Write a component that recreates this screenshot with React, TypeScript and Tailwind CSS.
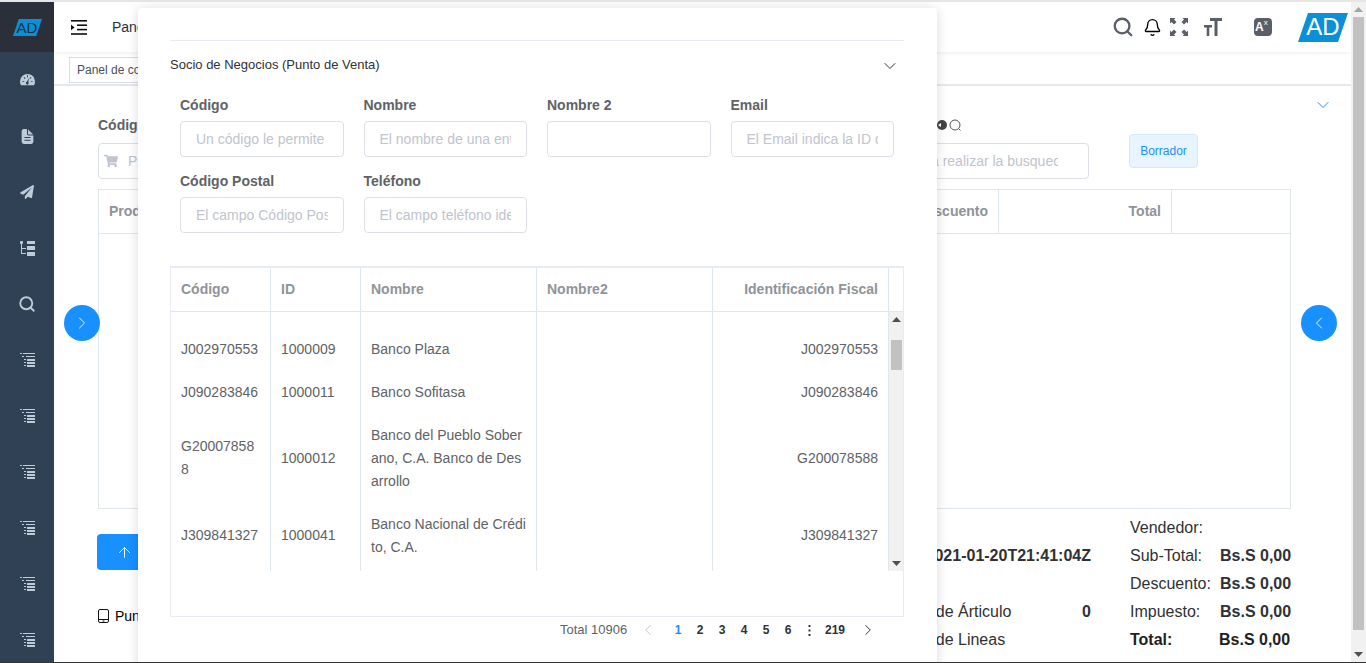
import { ChevronDown, ChevronLeft, ChevronRight, ArrowUp, Search, Bell } from 'lucide-react';
import { FaPaperPlane, FaShoppingCart } from 'react-icons/fa';
import { IoDocumentText } from 'react-icons/io5';

const rows = [
  { code: 'J002970553', id: '1000009', name: 'Banco Plaza', fiscal: 'J002970553' },
  { code: 'J090283846', id: '1000011', name: 'Banco Sofitasa', fiscal: 'J090283846' },
  { code: 'G200078588', id: '1000012', name: 'Banco del Pueblo Soberano, C.A. Banco de Desarrollo', fiscal: 'G200078588' },
  { code: 'J309841327', id: '1000041', name: 'Banco Nacional de Crédito, C.A.', fiscal: 'J309841327' },
];

const totals = [
  { label: 'Sub-Total:', value: 'Bs.S 0,00' },
  { label: 'Descuento:', value: 'Bs.S 0,00' },
  { label: 'Impuesto:', value: 'Bs.S 0,00' },
];

const listIcons = [0, 1, 2, 3, 4, 5];

function DashboardIcon() {
  return (
    <svg width="15" height="13" viewBox="0 0 16 13" className="-mt-px">
      <path d="M8 0.500a8 8 0 0 0-8 8c0 1.500.4 2.900 1.100 4h13.800c.7-1.100 1.100-2.500 1.100-4a8 8 0 0 0-8-8z" fill="#bfcbd9" />
      <path d="M7.500 2h1v2h-1zM2.500 8h2v1h-2zM11.500 8h2v1h-2zM3.800 4.500l.7-.7 1.400 1.400-.7.7zM11.500 3.800l.7.7-1.400 1.400-.7-.7z" fill="#304156" />
      <path d="M9.800 5l-1 4.200a1.500 1.500 0 1 1-1.600-.2z" fill="#304156" />
    </svg>
  );
}

function TreeIcon() {
  return (
    <svg width="15" height="15" viewBox="0 0 15 15" fill="#bfcbd9">
      <rect x="0" y="0" width="3" height="3" rx="1" />
      <rect x="1" y="3" width="1" height="10" />
      <rect x="1" y="7" width="5" height="1" />
      <rect x="1" y="12" width="5" height="1" />
      <rect x="7" y="0" width="8" height="3" />
      <rect x="7" y="5" width="8" height="4" />
      <rect x="7" y="11" width="8" height="4" />
    </svg>
  );
}

function ListIcon() {
  return (
    <svg width="15" height="14" viewBox="0 0 15 14" fill="#bfcbd9">
      <rect x="0" y="0" width="2" height="1" />
      <rect x="3" y="0" width="12" height="1" />
      <rect x="2" y="3" width="2" height="1" />
      <rect x="6" y="3" width="9" height="1" />
      <rect x="4" y="6" width="2" height="1" />
      <rect x="7" y="6" width="8" height="2" />
      <rect x="4" y="9" width="2" height="1" />
      <rect x="7" y="9" width="8" height="2" />
      <rect x="4" y="12" width="2" height="1" />
      <rect x="7" y="12" width="8" height="2" />
    </svg>
  );
}

function FullscreenIcon() {
  return (
    <svg width="18" height="18" viewBox="0 0 18 18" fill="#5a5e66">
      <path d="M0 0h5.500L4 1.500 6.500 4 4 6.500 1.500 4 0 5.500z" />
      <path d="M18 0v5.500L16.500 4 14 6.500 11.500 4 14 1.500 12.500 0z" />
      <path d="M0 18v-5.500L1.500 14 4 11.500 6.500 14 4 16.500 5.500 18z" />
      <path d="M18 18h-5.500l1.500-1.500L11.500 14 14 11.500l2.500 2.500 1.500-1.500z" />
    </svg>
  );
}

function TextSizeIcon() {
  return (
    <svg width="18" height="18" viewBox="0 0 18 18" fill="#5a5e66">
      <path d="M6 0h12v3h-4.500v15h-3V3H6z" />
      <path d="M0 7h8v2.500H5.300V18H2.700V9.500H0z" />
    </svg>
  );
}

function HamburgerIcon() {
  return (
    <svg width="16" height="15" viewBox="0 0 16 15" fill="#111">
      <rect x="0" y="0" width="16" height="1.600" />
      <rect x="6" y="4.400" width="10" height="1.600" />
      <rect x="6" y="8.800" width="10" height="1.600" />
      <rect x="0" y="13.200" width="16" height="1.600" />
      <path d="M0 4.500l3.500 2.900L0 10.200z" />
    </svg>
  );
}

function TabletIcon() {
  return (
    <svg width="11" height="14" viewBox="0 0 11 14" fill="none" stroke="#111" strokeWidth="1">
      <rect x="0.500" y="0.500" width="10" height="13" rx="1.500" />
      <path d="M0.500 10.500h10" />
      <path d="M4.500 12h2" />
    </svg>
  );
}

function LogoMark({ className, textClass }: { className: string; textClass: string }) {
  return (
    <div className={`relative flex items-center justify-center ${className}`}>
      <svg className="absolute inset-0 h-full w-full" viewBox="0 0 50 29" preserveAspectRatio="none">
        <polygon points="10,0 50,0 40,29 0,29" fill="#0a90d6" />
      </svg>
      <span className={`relative ${textClass}`}>AD</span>
    </div>
  );
}

function ModalField({ label, placeholder }: { label: string; placeholder?: string }) {
  return (
    <div className="w-[163.500px]">
      <div className="h-[16px] text-sm leading-[16px] font-bold text-[#606266]">{label}</div>
      <div className="mt-2 flex h-9 items-center overflow-hidden rounded border border-[#dcdfe6] px-[15px] text-sm whitespace-nowrap text-[#c0c4cc]">
        <span className="block w-full overflow-hidden">{placeholder}</span>
      </div>
    </div>
  );
}

function ScrollArrow({ up, color }: { up?: boolean; color: string }) {
  return (
    <svg width="9" height="5" viewBox="0 0 9 5" fill={color}>
      {up ? <path d="M4.500 0L9 5H0z" /> : <path d="M0 0h9L4.500 5z" />}
    </svg>
  );
}

export default function App() {
  return (
    <div className="relative h-[663px] w-[1366px] overflow-hidden bg-white font-['Liberation_Sans',Arial,sans-serif] text-sm">
      <div className="flex h-[662px] overflow-hidden border-t-2 border-[#e6e6e6]">
        {/* sidebar */}
        <aside className="w-[54px] shrink-0 bg-[#304156]">
          <div className="flex h-[50px] items-center justify-center bg-[#2b2f3a]">
            <LogoMark className="h-[17px] w-[29px]" textClass="text-[15px] leading-none text-[#1f2d3d]" />
          </div>
          <div className="flex h-[56px] items-center justify-center">
            <DashboardIcon />
          </div>
          <div className="flex h-[56px] items-center justify-center">
            <IoDocumentText className="text-[#bfcbd9]" size={17} />
          </div>
          <div className="flex h-[56px] items-center justify-center">
            <FaPaperPlane className="text-[#bfcbd9]" size={14} />
          </div>
          <div className="flex h-[56px] items-center justify-center">
            <TreeIcon />
          </div>
          <div className="flex h-[56px] items-center justify-center">
            <Search className="text-[#bfcbd9]" size={18} strokeWidth={2.500} />
          </div>
          {listIcons.map((i) => (
            <div key={i} className="flex h-[56px] items-center justify-center">
              <ListIcon />
            </div>
          ))}
        </aside>

        <main className="flex w-[1297px] shrink-0 flex-col">
          {/* header */}
          <header className="flex h-[50px] shrink-0 items-center pr-[3px] pl-[17px] shadow-[0_1px_4px_rgba(0,21,41,0.08)]">
            <HamburgerIcon />
            <span className="ml-[25px] text-sm text-[#303133]">Panel de control</span>
            <div className="ml-auto flex items-center">
              <Search className="text-[#5a5e66]" size={22} strokeWidth={2.500} />
              <Bell className="ml-[9px] text-black" size={19} strokeWidth={1.700} />
              <div className="ml-[8px]">
                <FullscreenIcon />
              </div>
              <div className="ml-[16px]">
                <TextSizeIcon />
              </div>
              <div className="ml-[32px] flex h-[18px] w-[18px] items-start rounded-sm bg-[#5a5e66] pl-[1px] text-[12px] leading-[19px] font-bold text-white">
                A<span className="text-[8px] leading-[10px] font-normal">x</span>
              </div>
              <LogoMark className="ml-[26px] h-[29px] w-[50px]" textClass="text-[24px] leading-none text-white" />
            </div>
          </header>

          {/* tags bar */}
          <div className="flex h-[34px] shrink-0 items-center border-b-2 border-[#e4e7ed] pt-[3px] pl-[15px]">
            <div className="flex h-[26px] w-[110px] items-center border border-[#d8dce5] px-[7px] text-xs whitespace-nowrap text-[#495060]">
              Panel de control
            </div>
          </div>

          {/* pos form */}
          <div className="relative flex-1 pr-[60px] pl-[44px]">
            <div className="flex h-[103px] pt-[31px]">
              <div className="w-[300px]">
                <div className="text-sm leading-4 font-bold text-[#606266]">Código de Producto</div>
                <div className="mt-[10px] flex h-9 items-center rounded border border-[#dcdfe6] pl-[5px] text-[#c0c4cc]">
                  <FaShoppingCart size={14} />
                  <span className="ml-[10px]">Producto</span>
                </div>
              </div>
              <div className="ml-[531px] w-[160px]">
                <div className="flex h-4 items-center justify-end pr-[127px]">
                  <svg width="26" height="12" viewBox="0 0 26 12" className="shrink-0">
                    <circle cx="6" cy="6" r="5" fill="#444" />
                    <path d="M2 6l3-2v4z" fill="#fff" />
                    <circle cx="19" cy="6" r="5" fill="none" stroke="#555" strokeWidth="1" />
                    <path d="M22.500 9.500l2 2" stroke="#555" strokeWidth="1" />
                  </svg>
                </div>
                <div className="mt-[10px] flex h-9 items-center overflow-hidden rounded border border-[#dcdfe6] pr-[30px] pl-[1px] text-sm whitespace-nowrap text-[#c0c4cc]">
                  <span className="block w-full overflow-hidden">a realizar la busqueda</span>
                </div>
              </div>
              <div className="mt-[17px] ml-10 flex h-[34px] w-[69px] items-center justify-center rounded border border-[#d1e9ff] bg-[#e8f4ff] text-xs text-[#1890ff]">
                Borrador
              </div>
            </div>
            <ChevronDown className="absolute top-[9px] right-[18px] text-[#1890ff]" size={20} strokeWidth={1.200} />

            {/* products table */}
            <div className="h-[320px] border border-[#dfe6ec]">
              <div className="flex h-[44px] items-center border-b border-[#dfe6ec] text-sm font-bold text-[#909399]">
                <span className="w-[700px] pb-[2px] pl-[10px]">Producto</span>
                <div className="w-[199px] pr-[10px] pb-[2px] text-right">Descuento</div>
                <div className="flex h-full w-[174px] items-center justify-end border-x border-[#dfe6ec] pr-[10px] pb-[2px]">
                  Total
                </div>
              </div>
            </div>

            {/* totals */}
            <div className="flex pt-[5px] text-[16px] leading-[28px] text-[#303133]">
              <div className="w-[300px] pt-[20px]">
                <div className="-ml-px flex h-9 w-[100px] items-center rounded bg-[#1890ff] pl-[19px] text-white">
                  <ArrowUp size={17} strokeWidth={1.300} />
                </div>
                <div className="mt-[36px] flex items-center text-sm">
                  <TabletIcon />
                  <span className="ml-[6px] text-black">Punto de Venta</span>
                </div>
              </div>
              <div className="ml-[471px] w-[225px] pt-[28px]">
                <div className="text-right font-bold whitespace-nowrap">2021-01-20T21:41:04Z</div>
                <div className="mt-[28px] flex justify-between">
                  <span>Cantidad de Árticulo</span>
                  <span className="font-bold">0</span>
                </div>
                <div className="flex justify-between">
                  <span>Cantidad de Lineas</span>
                </div>
              </div>
              <div className="ml-[39px] w-[161px] whitespace-nowrap">
                <div>Vendedor:</div>
                {totals.map((t) => (
                  <div key={t.label} className="flex">
                    <span className="w-[90px] shrink-0">{t.label}</span>
                    <span className="font-bold">{t.value}</span>
                  </div>
                ))}
                <div className="flex font-bold text-[#1f1f1f]">
                  <span className="w-[89px] shrink-0">Total:</span>
                  <span>Bs.S 0,00</span>
                </div>
              </div>
            </div>

            <div className="absolute top-[219px] left-[10px] flex h-9 w-9 items-center justify-center rounded-full bg-[#1890ff] text-white">
              <ChevronRight size={20} strokeWidth={1.100} />
            </div>
            <div className="absolute top-[219px] left-[1247px] flex h-9 w-9 items-center justify-center rounded-full bg-[#1890ff] text-white">
              <ChevronLeft size={20} strokeWidth={1.100} />
            </div>
          </div>
        </main>

        {/* window scrollbar */}
        <div className="flex w-[15px] shrink-0 flex-col items-center bg-[#f1f1f1]">
          <div className="flex h-[15px] items-center justify-center">
            <ScrollArrow up color="#a3a3a3" />
          </div>
          <div className="h-[613px] w-[11px] bg-[#c1c1c1]" />
          <div className="mt-auto flex h-[15px] items-center justify-center">
            <ScrollArrow color="#505050" />
          </div>
        </div>
      </div>
      <div className="relative z-10 h-px bg-[#333]" />

      {/* dialog */}
      <div className="absolute top-[8px] left-[138px] h-[680px] w-[799px] rounded bg-white pt-8 pr-[33px] pl-8 shadow-[0_1px_12px_rgba(0,0,0,0.15)]">
        <div className="flex h-[48px] items-center justify-between border-t border-[#e6ebf5] pt-[2px] pr-[4px] text-[13px] text-[#303133]">
          <span>Socio de Negocios (Punto de Venta)</span>
          <ChevronDown size={20} strokeWidth={1.200} className="text-[#303133]" />
        </div>
        <div className="flex flex-wrap gap-x-5 gap-y-4 pt-[9px] pl-[10px]">
          <ModalField label="Código" placeholder="Un código le permite identificar" />
          <ModalField label="Nombre" placeholder="El nombre de una entidad" />
          <ModalField label="Nombre 2" />
          <ModalField label="Email" placeholder="El Email indica la ID de correo" />
          <ModalField label="Código Postal" placeholder="El campo Código Postal" />
          <ModalField label="Teléfono" placeholder="El campo teléfono identifica" />
        </div>

        <div className="mt-[33px] h-[351px] border border-t-2 border-[#e6ebf5]">
          <div className="flex h-[44px] border-b border-[#dfe6ec] text-sm font-bold text-[#909399]">
            <div className="flex w-[100px] items-center border-r border-[#dfe6ec] pb-[2px] pl-[10px]">Código</div>
            <div className="flex w-[90px] items-center border-r border-[#dfe6ec] pb-[2px] pl-[10px]">ID</div>
            <div className="flex w-[176px] items-center border-r border-[#dfe6ec] pb-[2px] pl-[10px]">Nombre</div>
            <div className="flex w-[176px] items-center border-r border-[#dfe6ec] pb-[2px] pl-[10px]">Nombre2</div>
            <div className="flex w-[176px] items-center justify-end border-r border-[#dfe6ec] pr-[10px] pb-[2px]">
              Identificación Fiscal
            </div>
            <div className="flex-1" />
          </div>
          <div className="flex h-[259px] overflow-hidden">
            <div className="w-[718px] shrink-0 text-sm leading-[23px] text-[#606266]">
              <div className="flex h-[15.500px]">
                <div className="w-[100px] border-r border-[#dfe6ec]" />
                <div className="w-[90px] border-r border-[#dfe6ec]" />
                <div className="w-[176px] border-r border-[#dfe6ec]" />
                <div className="w-[176px] border-r border-[#dfe6ec]" />
                <div className="w-[176px] border-r border-[#dfe6ec]" />
              </div>
              {rows.map((r) => (
                <div key={r.id} className="flex items-stretch">
                  <div className="flex w-[100px] items-center border-r border-[#dfe6ec] px-[10px] py-[10px] break-all">{r.code}</div>
                  <div className="flex w-[90px] items-center border-r border-[#dfe6ec] px-[10px] py-[10px]">{r.id}</div>
                  <div className="flex w-[176px] items-center border-r border-[#dfe6ec] px-[10px] py-[10px] break-all">{r.name}</div>
                  <div className="w-[176px] border-r border-[#dfe6ec]" />
                  <div className="flex w-[176px] items-center justify-end border-r border-[#dfe6ec] px-[10px] py-[10px]">{r.fiscal}</div>
                </div>
              ))}
              <div className="flex h-[30px]">
                <div className="w-[100px] border-r border-[#dfe6ec]" />
                <div className="w-[90px] border-r border-[#dfe6ec]" />
                <div className="w-[176px] border-r border-[#dfe6ec]" />
                <div className="w-[176px] border-r border-[#dfe6ec]" />
                <div className="w-[176px] border-r border-[#dfe6ec]" />
              </div>
            </div>
            <div className="flex flex-1 flex-col items-center bg-[#f1f1f1]">
              <div className="flex h-[15px] items-center justify-center">
                <ScrollArrow up color="#505050" />
              </div>
              <div className="mt-[13px] h-[30px] w-[11px] bg-[#c1c1c1]" />
              <div className="mt-auto flex h-[15px] items-center justify-center">
                <ScrollArrow color="#505050" />
              </div>
            </div>
          </div>
        </div>

        <div className="flex h-[26px] items-center pl-[390px] text-xs font-bold text-[#303133]">
          <span className="w-[79px] text-[13px] font-normal text-[#606266]">Total 10906</span>
          <ChevronLeft size={18} strokeWidth={1.300} className="text-[#c0c4cc]" />
          <div className="ml-[10px] flex items-center">
            <span className="w-[22px] text-center text-[#1890ff]">1</span>
            <span className="w-[22px] text-center">2</span>
            <span className="w-[22px] text-center">3</span>
            <span className="w-[22px] text-center">4</span>
            <span className="w-[22px] text-center">5</span>
            <span className="w-[22px] text-center">6</span>
            <span className="flex w-[20px] justify-center">
              <svg width="3" height="11" viewBox="0 0 3 11" fill="#303133">
                <rect x="0.500" y="0" width="2" height="2" rx="0.500" />
                <rect x="0.500" y="4.500" width="2" height="2" rx="0.500" />
                <rect x="0.500" y="9" width="2" height="2" rx="0.500" />
              </svg>
            </span>
            <span className="w-[32px] text-center">219</span>
          </div>
          <ChevronRight size={18} strokeWidth={1.300} className="ml-[8px] text-[#303133]" />
        </div>
      </div>
    </div>
  );
}
